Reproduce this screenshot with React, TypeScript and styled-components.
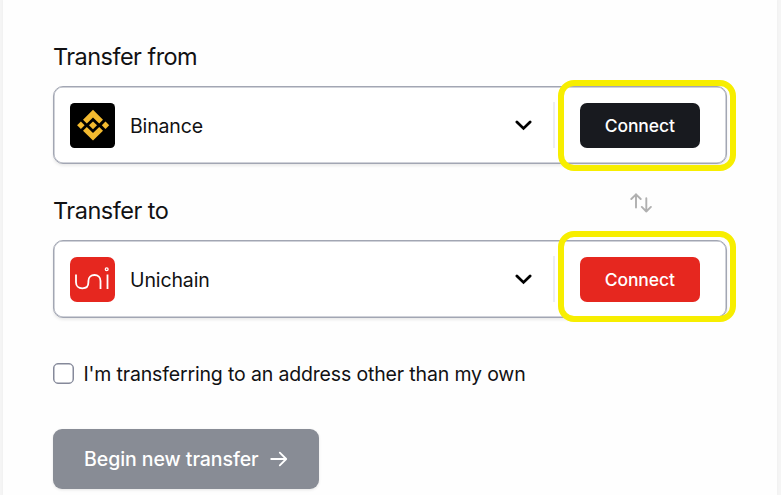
import React from "react";
import styled, { createGlobalStyle } from "styled-components";

const GlobalStyle = createGlobalStyle`
  *, *::before, *::after { box-sizing: border-box; }
  html, body { margin: 0; overflow: hidden; background: #f5f5f5; }
  body, button, input { font-family: Inter, "Liberation Sans", sans-serif; color: #111113; }
`;

const Page = styled.main`
  height: 495px;
  padding: 0 4px 0 3px;
`;

const Panel = styled.form`
  display: flex;
  flex-direction: column;
  align-items: flex-start;
  height: 495px;
  padding: 41px 50px 0;
  background: #fefefe;
  box-shadow: 0 0 3px rgba(0, 0, 0, 0.04);
`;

const LabelRow = styled.div<{ $gap?: number }>`
  display: flex;
  align-items: center;
  width: 100%;
  height: 31px;
  margin-top: ${(p) => p.$gap ?? 0}px;
  margin-bottom: 14px;
`;

const FieldLabel = styled.h2<{ $tracking: number }>`
  margin: 0;
  font-size: 23.5px;
  font-weight: 400;
  line-height: 31px;
  letter-spacing: ${(p) => p.$tracking}px;
  white-space: nowrap;
`;

const Swap = styled.button`
  display: flex;
  margin: -15px 75px 0 auto;
  padding: 0;
  border: 0;
  background: none;
`;

const Field = styled.div`
  position: relative;
  display: flex;
  align-items: center;
  width: 674px;
  height: 78px;
  padding: 0 26px 0 16px;
  border: 1px solid #a2a6b3;
  border-radius: 10px;
  background: #fff;
  box-shadow: inset 0 0 0 0.5px #a2a6b3, 0 2px 3px rgba(0, 0, 0, 0.08);
`;

const Logo = styled.svg`
  flex: none;
  width: 45px;
  height: 45px;
`;

const NetworkName = styled.span<{ $tracking: number }>`
  margin-left: 15px;
  padding-top: 1px;
  font-size: 19.5px;
  line-height: 28px;
  letter-spacing: ${(p) => p.$tracking}px;
`;

const Chevron = styled.svg`
  margin-left: auto;
`;

const Divider = styled.span`
  width: 2px;
  height: 46px;
  margin: 0 25px 0 21px;
  background: #eceef3;
`;

const Connect = styled.button<{ $color: string }>`
  width: 120.5px;
  height: 45px;
  padding: 0;
  border: 0;
  border-radius: 7px;
  background: ${(p) => p.$color};
  color: #fff;
  font-size: 17.5px;
  font-weight: 500;
  letter-spacing: -0.1px;
`;

const Highlight = styled.span<{ $top: number }>`
  position: absolute;
  top: ${(p) => p.$top}px;
  right: -10px;
  width: 178.5px;
  height: 91px;
  border: 6px solid #f7ee00;
  border-radius: 16px;
  pointer-events: none;
`;

const CheckRow = styled.label`
  display: flex;
  align-items: center;
  height: 28px;
  margin-top: 42px;
  font-size: 19.5px;
  line-height: 28px;
  white-space: nowrap;
`;

const Checkbox = styled.input`
  appearance: none;
  width: 21px;
  height: 21px;
  margin: -1px 9.5px 0 0;
  border: 1px solid #85899a;
  border-radius: 5px;
  background: #fff;
  box-shadow: inset 0 0 0 0.5px #85899a;
`;

const CheckText = styled.span`
  letter-spacing: -0.155px;
`;

const Submit = styled.button`
  display: flex;
  align-items: center;
  width: 266px;
  height: 60px;
  margin-top: 41px;
  padding: 0 0 0 31px;
  border: 0;
  border-radius: 9px;
  background: #888c95;
  color: #fff;
  font-size: 19.5px;
  font-weight: 500;
  white-space: nowrap;
  box-shadow: 0 1px 3px rgba(0, 0, 0, 0.1);
`;

const SubmitText = styled.span`
  width: 186px;
  text-align: left;
  letter-spacing: -0.06px;
  color: #fff;
`;

const BinanceLogo = () => (
  <Logo viewBox="0 0 45 45">
    <rect width="45" height="45" rx="4.5" fill="#000" />
    <g fill="#f3ba2f">
      <path d="M23 6.8L33 16.8L29.2 20.6L23 14.4L16.8 20.6L13 16.8Z" />
      <path d="M23 37.4L33 27.8L29.2 24L23 29.9L16.8 24L13 27.8Z" />
      <path d="M23 18.4L27 22.3L23 26.2L19 22.3Z" />
      <path d="M10.9 18.5L14.6 22.3L10.9 26.1L7.1 22.3Z" />
      <path d="M35.5 18.5L39.2 22.3L35.5 26.1L31.8 22.3Z" />
    </g>
  </Logo>
);

const UnichainLogo = () => (
  <Logo viewBox="0 0 45 45">
    <rect width="45" height="45" rx="7" fill="#e6271f" />
    <g fill="none" stroke="#fff" strokeWidth="1.8">
      <path d="M6 17.5V25.2C6 29 8.6 31.3 12.3 31.3S18.4 29 18.4 25.2V24C18.4 20.3 21 18 24.5 18S30.5 20.3 30.5 24V32M37.5 17.5V32" />
      <circle cx="36.7" cy="12.3" r="1.4" strokeWidth="1.3" />
    </g>
  </Logo>
);

const ChevronDown = () => (
  <Chevron width="17" height="11" viewBox="0 0 17 11" fill="none" stroke="#000" strokeWidth="2.8">
    <path d="M1.9 2L8.5 8.4L15.1 2" strokeLinecap="round" strokeLinejoin="miter" />
  </Chevron>
);

const SwapIcon = () => (
  <svg width="22" height="20" viewBox="0 0 22 20" fill="none" stroke="#b0b0b0" strokeWidth="1.9" strokeLinecap="round" strokeLinejoin="round">
    <path d="M6 14.5V1.3M1.3 6L6 1.3L10.7 6M16.3 5.3V18.5M11.8 13.9L16.3 18.5L20.9 13.9" />
  </svg>
);

const ArrowRight = () => (
  <svg width="18" height="16" viewBox="0 0 18 16" fill="none" stroke="#fff" strokeWidth="1.8" strokeLinecap="round" strokeLinejoin="round">
    <path d="M1.2 8H16M9.8 1.6L16.2 8L9.8 14.4" />
  </svg>
);

type NetworkFieldProps = {
  name: string;
  tracking: number;
  logo: React.ReactNode;
  color: string;
  highlightTop: number;
};

const NetworkField = ({ name, tracking, logo, color, highlightTop }: NetworkFieldProps) => (
  <Field>
    {logo}
    <NetworkName $tracking={tracking}>{name}</NetworkName>
    <ChevronDown />
    <Divider />
    <Connect type="button" $color={color}>Connect</Connect>
    <Highlight $top={highlightTop} />
  </Field>
);

export default function App() {
  return (
    <>
      <GlobalStyle />
      <Page>
        <Panel>
          <LabelRow>
            <FieldLabel $tracking={-0.54}>Transfer from</FieldLabel>
          </LabelRow>
          <NetworkField name="Binance" tracking={-0.15} logo={<BinanceLogo />} color="#181a1f" highlightTop={-7} />
          <LabelRow $gap={31.4}>
            <FieldLabel $tracking={-0.5}>Transfer to</FieldLabel>
            <Swap type="button" aria-label="Swap networks"><SwapIcon /></Swap>
          </LabelRow>
          <NetworkField name="Unichain" tracking={-0.12} logo={<UnichainLogo />} color="#e6271f" highlightTop={-10.9} />
          <CheckRow>
            <Checkbox type="checkbox" />
            <CheckText>I'm transferring to an address other than my own</CheckText>
          </CheckRow>
          <Submit type="button">
            <SubmitText>Begin new transfer</SubmitText>
            <ArrowRight />
          </Submit>
        </Panel>
      </Page>
    </>
  );
}
